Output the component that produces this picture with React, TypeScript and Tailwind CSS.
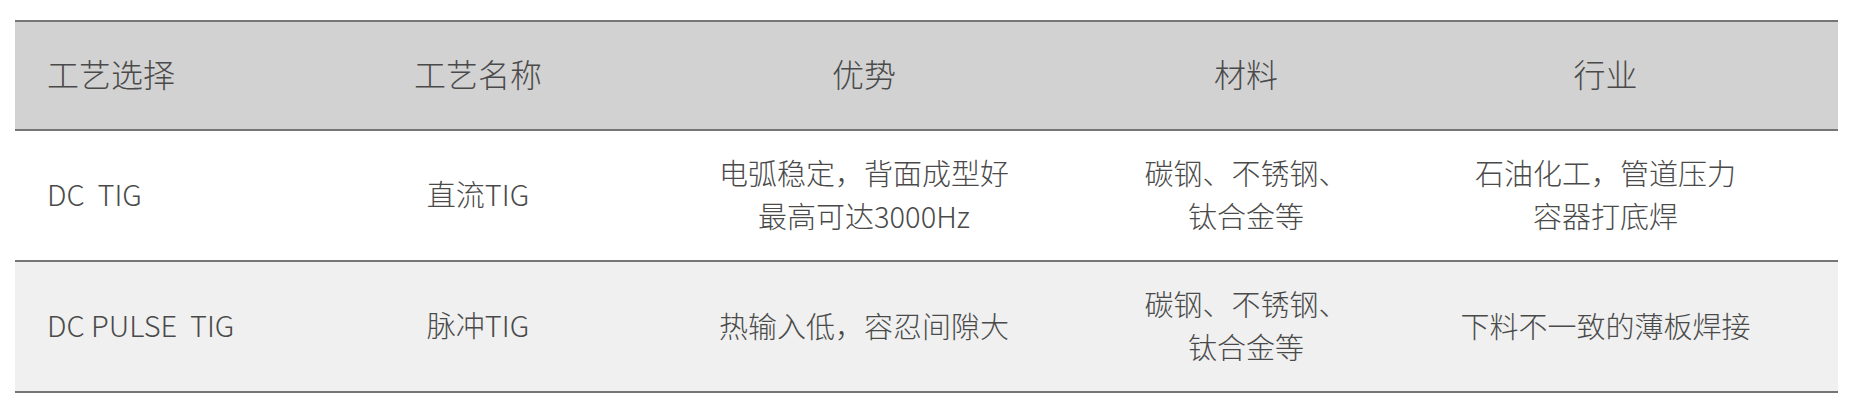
const rows = [
  {
    mode: "DC  TIG",
    name: "直流TIG",
    merit: ["电弧稳定，背面成型好", "最高可达3000Hz"],
    material: ["碳钢、不锈钢、", "钛合金等"],
    industry: ["石油化工，管道压力", "容器打底焊"],
    bg: "bg-white",
  },
  {
    mode: "DC PULSE  TIG",
    name: "脉冲TIG",
    merit: ["热输入低，容忍间隙大"],
    material: ["碳钢、不锈钢、", "钛合金等"],
    industry: ["下料不一致的薄板焊接"],
    bg: "bg-[#eff0ef]",
  },
];

function Lines({ lines }: { lines: string[] }) {
  return (
    <div className="text-center leading-[43px]">
      {lines.map((l) => (
        <div key={l}>{l}</div>
      ))}
    </div>
  );
}

export default function App() {
  return (
    <div
      className="w-[1852px] h-[407px] bg-white pt-[20px] px-[15px] text-[#4a4a4a] text-[29px] font-light"
      style={{ fontFamily: '"Noto Sans CJK SC", "Noto Sans", sans-serif' }}
    >
      <div className="w-[1823px] border-t-2 border-[#767676]">
        {/* header */}
        <div className="grid grid-cols-[332px_262px_510px_254px_1fr] h-[109px] items-center bg-[#d2d2d2] border-b-2 border-[#767676] text-[32px] pb-[6px]">
          <div className="pl-[32px]">工艺选择</div>
          <div className="text-center">工艺名称</div>
          <div className="text-center">优势</div>
          <div className="text-center">材料</div>
          <div className="text-center">行业</div>
        </div>

        {rows.map((r) => (
          <div
            key={r.mode}
            className={`grid grid-cols-[332px_262px_510px_254px_1fr] h-[131px] items-center border-b-2 border-[#767676] pb-[3px] ${r.bg}`}
          >
            <div className="pl-[32px] whitespace-pre">{r.mode}</div>
            <div className="text-center">{r.name}</div>
            <Lines lines={r.merit} />
            <Lines lines={r.material} />
            <Lines lines={r.industry} />
          </div>
        ))}
      </div>
    </div>
  );
}
